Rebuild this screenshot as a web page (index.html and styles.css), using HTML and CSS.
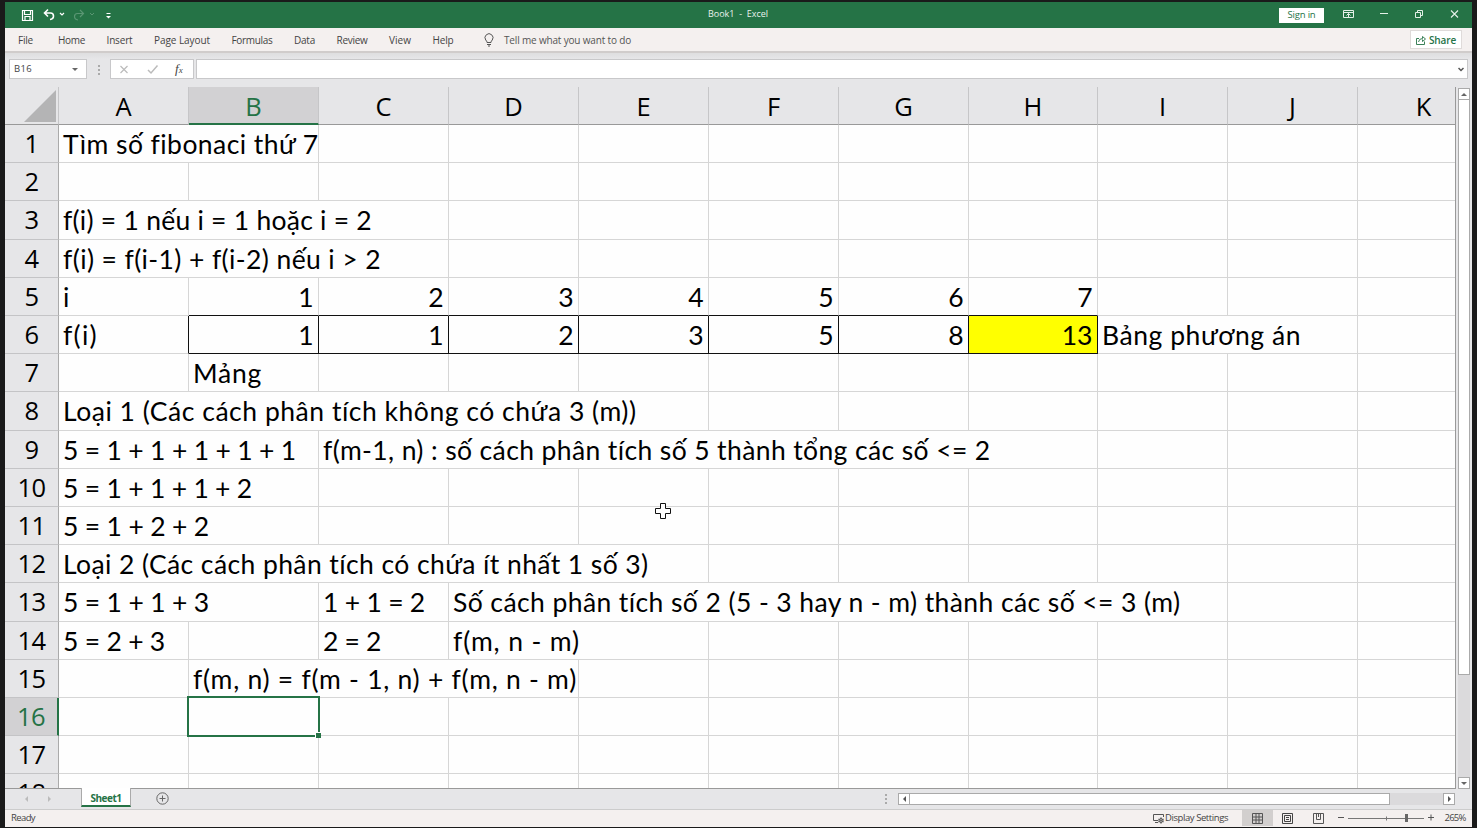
FILE: index.html
```html
<!DOCTYPE html>
<html lang="en">
<head>
<meta charset="utf-8">
<title>Book1 - Excel</title>
<link rel="stylesheet" href="styles.css">
</head>
<body>
<div class="window">
  <header class="titlebar">
    <div class="quick">
      <svg width="100" height="20" viewBox="0 0 100 20" fill="none" stroke="#fff">
        <path d="M4.500 5.500h10v10h-10zM6.500 5.500v4h6v-4M7 15v-3.500h5v3.500" stroke-width="1.200"/>
        <path d="M30 4.500 26.500 8l3.500 3.500M27 8h5.500q3 0 3 3t-3.500 3.500" stroke-width="1.600"/>
        <path d="m42 8 2 2 2-2" stroke-width="1.200"/>
        <g stroke="#5a9673"><path d="m62 5 3.500 3.500L62 12M65 8.500h-5.500q-3 0-3 3t3.500 3.500" stroke-width="1.200"/><path d="m72 8 2 2 2-2"/></g>
        <path d="M88.500 8.500h4"/><path d="m88 11 2.500 2.500L93 11z" fill="#fff" stroke="none"/>
      </svg>
    </div>
    <span class="title" data-w="60">Book1&nbsp; -&nbsp; Excel</span>
    <div class="winctl">
      <span class="signin"><span data-w="28">Sign in</span></span>
      <svg width="136" height="20" viewBox="0 0 136 20" fill="none" stroke="#e4f0e8">
        <path d="M10.500 5.500h10v7h-10zM10.500 7.500h10M15.500 12V8.500M13.500 10.500l2-2 2 2"/>
        <path d="M47 8.500h8"/>
        <path d="M82.500 7.500h5v5h-5zM84.500 7V5.500h5v5H88"/>
        <path d="m118 5.500 7 7m0-7-7 7" stroke-width="1.100"/>
      </svg>
    </div>
  </header>
  <nav class="ribbon">
    <span class="file" data-w="15">File</span><span data-w="27">Home</span><span data-w="26">Insert</span><span data-w="56">Page Layout</span><span data-w="41">Formulas</span><span data-w="21">Data</span><span data-w="31">Review</span><span data-w="22">View</span><span data-w="21">Help</span>
    <svg class="bulb" width="12" height="14" viewBox="0 0 12 14" fill="none" stroke="#555"><path d="M4 9.500Q4 8 2.700 7A4 4 0 1 1 9.300 7Q8 8 8 9.500zM4 11.500h4M5 13h2"/></svg>
    <span class="tell" data-w="127">Tell me what you want to do</span>
    <div class="share"><svg width="10" height="10" viewBox="0 0 10 10" fill="none" stroke="#257346" stroke-width=".9"><path d="M3 3.500H.5v6h8v-3M2.500 7q.5-3.500 4-3.500V1.500L9.500 4 6.500 6.500v-2"/></svg><span data-w="27">Share</span></div>
  </nav>
  <div class="formula">
    <div class="namebox"><span data-w="18">B16</span><i class="tri down"></i></div>
    <div class="dots"><i></i><i></i><i></i></div>
    <div class="fxbox">
      <svg width="82" height="18" viewBox="0 0 82 18" fill="none"><path d="m9.500 6 7 7m0-7-7 7" stroke="#bbb" stroke-width="1.200"/><path d="m37 10 3 3 6.500-7.500" stroke="#bbb" stroke-width="1.500"/></svg>
      <span class="fx">f<small>x</small></span>
    </div>
    <div class="input"><svg width="6" height="5" viewBox="0 0 6 5" fill="none" stroke="#555" stroke-width="1.500"><path d="m.5 1 2.500 2.500L5.500 1"/></svg></div>
  </div>
  <main class="work">
    <div class="grid" id="grid"></div>
    <div class="vscroll"><b><i class="tri up"></i></b><div class="thumb"></div><b class="end"><i class="tri down"></i></b></div>
    <svg class="cursor" width="16" height="16" viewBox="0 0 16 16"><path d="M5.500.5h5v5h5v5h-5v5h-5v-5h-5v-5h5z" fill="#fff" stroke="#111"/></svg>
  </main>
  <div class="tabs">
    <i class="tri left pale"></i><i class="tri right pale"></i>
    <div class="sheet"><span data-w="31">Sheet1</span></div>
    <svg class="add" width="13" height="13" viewBox="0 0 13 13" fill="none" stroke="#666"><circle cx="6.500" cy="6.500" r="5.700"/><path d="M3.500 6.500h6M6.500 3.500v6"/></svg>
    <div class="dots tabdots"><i></i><i></i><i></i></div>
    <div class="hscroll"><b><i class="tri left"></i></b><div class="thumb"></div><b class="end"><i class="tri right"></i></b></div>
  </div>
  <footer class="status">
    <span class="ready" data-w="24">Ready</span>
    <svg class="disp" width="12" height="11" viewBox="0 0 12 11" fill="none" stroke="#555"><path d="M5 7.500H.5v-6h10V4M2 9.500h3"/><circle cx="8" cy="7.500" r="2"/><path d="M8 4v7M5 6l6 3M5 9l6-3" stroke-width=".7"/></svg>
    <span class="ds" data-w="63">Display Settings</span>
    <div class="view on"><svg width="11" height="11" viewBox="0 0 11 11" fill="none" stroke="#555"><path d="M.5.5h10v10H.5zM.5 4h10M.5 7h10M4 .5v10M7 .5v10"/></svg></div>
    <div class="view"><svg width="11" height="11" viewBox="0 0 11 11" fill="none" stroke="#444"><path d="M.5.5h10v10H.5zM2.500 2.500h6v6h-6zM4 4.500h3M4 6.500h3"/></svg></div>
    <div class="view"><svg width="11" height="11" viewBox="0 0 11 11" fill="none" stroke="#555"><path d="M.5.5h10v10H.5zM3.500 0v6.500h4V0M5.500 0v4"/></svg></div>
    <svg class="zoom" width="98" height="14" viewBox="0 0 98 14" fill="none" stroke="#555"><path d="M1 6.500h6M91 6.500h6M94 3.500v6"/><path d="M11 7.500h76M49.500 5.500v4" stroke="#777"/><path d="M68 3h3v8h-3z" fill="#666" stroke="none"/></svg>
    <span class="pct" data-w="21">265%</span>
  </footer>
</div>
<script src="app.js"></script>
</body>
</html>
```
FILE: styles.css
```css
* { box-sizing: border-box; }
body { margin: 0; width: 1477px; height: 828px; overflow: hidden; background: #1a1a1a; padding: 2px 5px 1px; font: 10px/14px "Open Sans", "Noto Sans", sans-serif; color: #444; }
svg { display: block; flex: none; }
span { white-space: nowrap; }
[data-w] { display: inline-block; flex: none; }
.window { width: 1467px; height: 825px; display: flex; flex-direction: column; background: #e6e6e8; }
.titlebar { height: 26px; flex: none; background: #257346; display: grid; grid-template-columns: 703px 1fr auto; align-items: center; color: #e8f2ec; }
.quick { padding-left: 13px; }
.quick svg { margin-top: -1px; }
.title { font-size: 9px; margin-top: -2px; justify-self: start; }
.winctl { display: flex; align-items: center; padding-right: 4px; }
.winctl svg { margin-left: 9px; margin-right: -1px; }
.signin { width: 45px; height: 15px; background: #fff; color: #257346; display: flex; justify-content: center; align-items: center; font-size: 9.500px; }
.ribbon { height: 25px; flex: none; background: #f4f0ef; border-bottom: 2px solid #d0cccb; display: flex; align-items: center; gap: 21.500px; padding: 0 10px 0 13px; }
.file { margin-right: 3.500px; }
.bulb { margin-left: 8px; }
.tell { margin-left: -12.500px; color: #555; }
.share { margin-left: auto; width: 52px; height: 19px; background: #fff; border: 1px solid #dfdbda; display: flex; align-items: center; gap: 3px; padding-left: 5px; color: #257346; font-weight: 600; }
.formula { height: 34px; flex: none; display: flex; padding: 6px 4px 7px; background: linear-gradient(#dededf, #e6e6e8 6px); }
.namebox, .fxbox, .input { background: #fff; border: 1px solid #c8c8ca; height: 20px; display: flex; align-items: center; }
.namebox { width: 78px; padding: 0 8px 0 4px; justify-content: space-between; font-size: 9.500px; }
.dots { display: grid; gap: 2px; align-content: center; width: 23px; justify-content: center; }
.dots i { width: 2px; height: 2px; background: #aaa; }
.fxbox { width: 84px; margin-right: 2px; }
.fx { margin-left: -18px; font: italic 13px/16px "Liberation Serif", serif; color: #444; }
.fx small { font-size: 9px; }
.input { flex: 1; justify-content: flex-end; padding-right: 3px; }
.tri { width: 0; height: 0; border: 3px solid transparent; flex: none; }
.tri.down { border-top-color: #666; border-bottom: 0; }
.tri.up { border-bottom-color: #666; border-top: 0; }
.tri.left { border-right-color: #555; border-left: 0; }
.tri.right { border-left-color: #555; border-right: 0; }
.tri.left.pale { border-right-color: #bbb; }
.tri.right.pale { border-left-color: #bbb; }
.work { position: relative; height: 702px; flex: none; display: flex; }
.grid { display: grid; grid-template-columns: 54px repeat(7, 130px) 129px 130px 130px 98px; width: 1451px; height: 702px; overflow: hidden; background: #fefefe; border-right: 1px solid #999; border-bottom: 1px solid #999; align-content: start; }
.c { border-right: 1px solid #d6d6d6; border-bottom: 1px solid #d6d6d6; min-width: 0; padding-left: 4px; font: 26.500px/38px Lato, sans-serif; color: #000; white-space: nowrap; position: relative; }
.c.last { border-right: 0; }
.num { text-align: right; padding-right: 4.500px; }
.box { border-color: #111; }
.over { border-bottom-color: #111; }
.pre { border-right-color: #111; }
.yellow { background: #ff0; }
.h { padding-left: 0; background: #e6e6e8; color: #000; font: 25.500px/38px "Open Sans", sans-serif; text-align: center; border-right: 1px solid #c6c6c8; border-bottom: 1px solid #999; }
.h.last { border-right: 0; padding-left: 33px; }
.h.row { line-height: 37px; letter-spacing: -.7px; border-right-color: #aaa; border-bottom-color: #c4c4c6; }
.h.on { background: #d2d1d3; color: #257346; }
.h.col.on { border-bottom: 2px solid #257346; }
.h.row.on { border-right: 2px solid #257346; }
.corner { background: #e6e6e8; border-bottom: 1px solid #999; border-right: 1px solid #c6c6c8; padding: 3px 0 0 19px; }
.sel::after { content: ""; position: absolute; inset: -2px; border: 2px solid #257346; z-index: 2; }
.sel::before { content: ""; position: absolute; right: -3px; bottom: -3px; width: 5px; height: 5px; background: #257346; border: solid #fff; border-width: 1px 0 0 1px; z-index: 3; }
.cursor { position: absolute; left: 650px; top: 416px; }
.vscroll { width: 12px; margin-left: 2px; padding-top: 1px; display: flex; flex-direction: column; background: #dbdadc; background-clip: content-box; }
.vscroll b, .hscroll b { width: 12px; height: 12px; flex: none; background: #fff; border: 1px solid #aaa; display: grid; place-items: center; }
.vscroll .thumb { height: 576px; background: #fff; border: 1px solid #aaa; margin-top: -1px; }
.vscroll .end { margin-top: auto; }
.tabs { height: 21px; flex: none; display: flex; background: #e6e6e8; border-bottom: 1px solid #ccc; align-items: center; padding-left: 20px; }
.tabs > .right { margin-left: 20px; }
.tabs > .tri { margin-top: -1px; }
.sheet { align-self: flex-start; width: 50px; height: 19px; margin: -1px 0 0 30px; padding-top: 2px; background: #fff; border: solid #aaa; border-width: 0 1px; border-bottom: 2px solid #257346; color: #257346; font-weight: 700; display: flex; justify-content: center; align-items: center; z-index: 1; }
.add { margin-left: 25px; margin-top: -1px; }
.tabdots { margin-left: 705px; margin-right: 1px; }
.hscroll { width: 557px; display: flex; background: #dbdadc; height: 12px; }
.hscroll .thumb { width: 481px; background: #fff; border: 1px solid #aaa; margin-left: -1px; }
.hscroll .end { margin-left: auto; }
.status { flex: 1; background: #f4f0ef; display: flex; align-items: center; font-size: 9.500px; padding: 0 0 1px 6px; }
.disp { margin-left: 1118px; }
.ds { margin-left: 0; margin-right: 14px; }
.view { width: 30.500px; height: 16px; display: grid; place-items: center; }
.view.on { background: #d2cfce; }
.zoom { margin-left: 3px; }
.pct { margin-left: 10px; }
```
FILE: app.js
```
const grid = document.getElementById("grid");
const letters = "ABCDEFGHIJK";
// row -> { column: [text, span, text width] }
const cells = {
  1: { A: ["Tìm số fibonaci thứ 7", 2, 255] },
  3: { A: ["f(i) = 1 nếu i = 1 hoặc i = 2", 3, 309] },
  4: { A: ["f(i) = f(i-1) + f(i-2) nếu i > 2", 3, 318] },
  5: { A: ["i", 1, 7], B: [1], C: [2], D: [3], E: [4], F: [5], G: [6], H: [7] },
  6: { A: ["f(i)", 1, 35], B: [1], C: [1], D: [2], E: [3], F: [5], G: [8], H: [13], I: ["Bảng phương án", 2, 199] },
  7: { B: ["Mảng", 1, 69] },
  8: { A: ["Loại 1 (Các cách phân tích không có chứa 3 (m))", 5, 574] },
  9: { A: ["5 = 1 + 1 + 1 + 1 + 1", 2, 233], C: ["f(m-1, n) : số cách phân tích số 5 thành tổng các số <= 2", 6, 668] },
  10: { A: ["5 = 1 + 1 + 1 + 2", 2, 189] },
  11: { A: ["5 = 1 + 2 + 2", 2, 146] },
  12: { A: ["Loại 2 (Các cách phân tích có chứa ít nhất 1 số 3)", 5, 586] },
  13: { A: ["5 = 1 + 1 + 3", 2, 146], C: ["1 + 1 = 2", 1, 102], D: ["Số cách phân tích số 2 (5 - 3 hay n - m) thành các số <= 3 (m)", 6, 728] },
  14: { A: ["5 = 2 + 3", 1, 102], C: ["2 = 2", 1, 58], D: ["f(m, n - m)", 2, 127] },
  15: { B: ["f(m, n) = f(m - 1, n) + f(m, n - m)", 3, 384] }
};

function add(cls, text, span, width) {
  const d = document.createElement("div");
  d.className = cls;
  if (span > 1) d.style.gridColumn = "span " + span;
  if (text !== undefined) {
    const s = document.createElement("span");
    s.textContent = text;
    if (width) s.dataset.w = width;
    d.append(s);
  }
  grid.append(d);
  return d;
}

add("corner").innerHTML = '<svg width="32" height="32"><path d="M32 0v32H0z" fill="#b4b4b5"/></svg>';
for (const l of letters) add("c h col" + (l === "B" ? " on" : "") + (l === "K" ? " last" : ""), l);

const line = k => Math.round(38.2 * k);
const heights = ["38px"];
for (let r = 1; r <= 18; r++) {
  heights.push(line(r) - line(r - 1) + "px");
  add("c h row" + (r === 16 ? " on" : ""), r);
  for (let i = 0; i < 11;) {
    const l = letters[i];
    const cell = cells[r] && cells[r][l] || [];
    const span = cell[1] || 1;
    let cls = "c";
    if (typeof cell[0] === "number") cls += " num";
    if (i >= 1 && i <= 7) {
      if (r === 5) cls += " over";
      if (r === 6) cls += " box";
    }
    if (r === 6 && i === 0) cls += " pre";
    if (r === 6 && l === "H") cls += " yellow";
    if (r === 16 && l === "B") cls += " sel";
    if (i + span >= 11) cls += " last";
    add(cls, cell[0], span, cell[2]);
    i += span;
  }
}
grid.style.gridTemplateRows = heights.join(" ");

for (const el of document.querySelectorAll("[data-w]")) {
  const target = +el.dataset.w;
  const natural = el.getBoundingClientRect().width;
  el.style.letterSpacing = (target - natural) / el.textContent.length + "px";
  el.style.width = target + "px";
}
```
